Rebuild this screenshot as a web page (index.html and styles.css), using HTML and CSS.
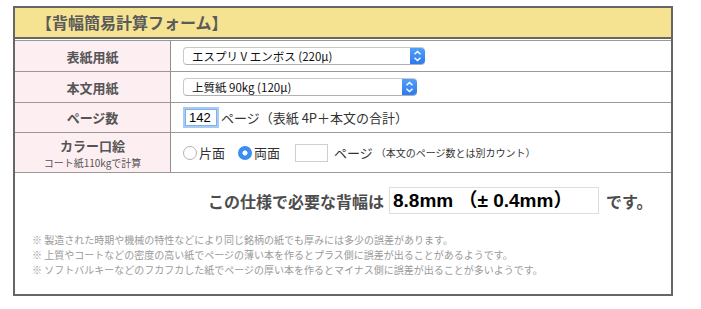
FILE: index.html
```html
<!DOCTYPE html>
<html lang="ja">
<head>
<meta charset="utf-8">
<title>背幅簡易計算フォーム</title>
<link rel="stylesheet" href="styles.css">
</head>
<body>
<div class="form">
  <h2 class="form-title">【背幅簡易計算フォーム】</h2>
  <div class="rows">
    <div class="row row-a">
      <div class="label">表紙用紙</div>
      <div class="field">
        <div class="select select-cover">
          <span class="select-text">エスプリ V エンボス (220μ)</span>
          <span class="select-btn"><svg width="15" height="18" viewBox="0 0 15 18"><path d="M4.5 7.2 L7.5 4.4 L10.5 7.2 M4.5 10.8 L7.5 13.6 L10.5 10.8" fill="none" stroke="#fff" stroke-width="1.4"/></svg></span>
        </div>
      </div>
    </div>
    <div class="row row-a">
      <div class="label">本文用紙</div>
      <div class="field">
        <div class="select select-body">
          <span class="select-text">上質紙 90kg (120μ)</span>
          <span class="select-btn"><svg width="15" height="18" viewBox="0 0 15 18"><path d="M4.5 7.2 L7.5 4.4 L10.5 7.2 M4.5 10.8 L7.5 13.6 L10.5 10.8" fill="none" stroke="#fff" stroke-width="1.4"/></svg></span>
        </div>
      </div>
    </div>
    <div class="row row-b">
      <div class="label">ページ数</div>
      <div class="field field-pages">
        <span class="num-input focused">142</span>
        <span class="field-text">ページ（表紙 4P＋本文の合計）</span>
      </div>
    </div>
    <div class="row row-c">
      <div class="label label-stack">
        <span class="label-main">カラー口絵</span>
        <span class="label-sub">コート紙110kgで計算</span>
      </div>
      <div class="field field-color">
        <span class="radio"></span><span class="field-text">片面</span>
        <span class="radio checked"></span><span class="field-text">両面</span>
        <span class="num-input empty"></span>
        <span class="field-text">ページ</span>
        <span class="small-note">（本文のページ数とは別カウント）</span>
      </div>
    </div>
  </div>
  <div class="result">
    <span class="result-label">この仕様で必要な背幅は</span>
    <span class="result-box">8.8mm （± 0.4mm）</span>
    <span class="result-label">です。</span>
  </div>
  <ul class="notes">
    <li>※ 製造された時期や機械の特性などにより同じ銘柄の紙でも厚みには多少の誤差があります。</li>
    <li>※ 上質やコートなどの密度の高い紙でページの薄い本を作るとプラス側に誤差が出ることがあるようです。</li>
    <li>※ ソフトバルキーなどのフカフカした紙でページの厚い本を作るとマイナス側に誤差が出ることが多いようです。</li>
  </ul>
</div>
</body>
</html>
```

FILE: styles.css
```css
* { box-sizing: border-box; }

body {
  margin: 0;
  background: #fff;
  font-family: "Noto Sans CJK JP", "Noto Sans", sans-serif;
  color: #333;
}

.form {
  width: 660px;
  height: 290px;
  margin: 6px 0 0 13px;
  border: 2px solid #666;
}

.form-title {
  margin: 0 0 1px;
  height: 31px;
  padding-left: 21px;
  background: #f5e391;
  border-bottom: 2px solid #666;
  font-size: 16px;
  font-weight: bold;
  line-height: 29px;
  color: #5a5a5a;
}

.rows {
  border-top: 1px solid #999;
}

.row {
  display: grid;
  grid-template-columns: 156px 1fr;
  border-bottom: 1px solid #999;
}
.row-a { height: 31px; }
.row-b { height: 30px; }
.row-c { height: 40px; }

.label {
  display: flex;
  align-items: center;
  justify-content: center;
  background: #fdeef2;
  border-right: 1px solid #8f8f8f;
  font-size: 13px;
  font-weight: bold;
  color: #555;
}

.label-stack {
  flex-direction: column;
  padding-top: 2px;
}
.label-main {
  line-height: 16px;
}
.label-sub {
  margin-top: 3px;
  font-size: 10px;
  font-weight: normal;
  line-height: 12px;
  color: #555;
}

.field {
  display: flex;
  align-items: center;
  padding-left: 12px;
}

.select {
  display: flex;
  align-items: stretch;
  height: 18px;
  border: 1px solid #c9c9c9;
  border-bottom-color: #b0b0b0;
  border-right: none;
  border-radius: 4px;
  background: #fff;
  font-size: 11.5px;
  color: #111;
  overflow: hidden;
}
.select-cover { width: 242px; }
.select-body { width: 234px; }

.select-text {
  flex: 1;
  padding-left: 8px;
  line-height: 16px;
}

.select-btn {
  width: 15px;
  margin: -1px 0;
  background: linear-gradient(#55a2f8, #2a78ee);
  border-radius: 0 4px 4px 0;
  display: flex;
  align-items: center;
  justify-content: center;
}

.field-pages { padding-left: 14px; }

.num-input {
  display: inline-block;
  height: 17px;
  border: 1px solid #c5c5c5;
  background: #fff;
  font-family: "Liberation Sans", "Noto Sans CJK JP", sans-serif;
  font-size: 13px;
  line-height: 15px;
  color: #000;
}
.num-input.focused {
  width: 32px;
  padding-left: 3px;
  border-color: #7fb0ee;
  box-shadow: 0 0 0 2px #a8cbf5;
}
.num-input.empty {
  width: 33px;
  height: 18px;
  margin-left: 15px;
  border-color: #cfcfcf;
}

.field-text {
  margin-left: 4px;
  font-size: 13px;
  color: #333;
}

.field-color { padding-left: 12px; }

.radio {
  width: 14px;
  height: 14px;
  border: 1px solid #b3b3b3;
  border-radius: 50%;
  background: #fff;
}
.radio.checked {
  margin-left: 13px;
  border: none;
  background: radial-gradient(circle, #fff 0 2.3px, #3b8eef 2.8px);
}
.field-color .field-text { margin-left: 2px; }
.field-color .num-input + .field-text { margin-left: 6px; }

.small-note {
  margin-left: 3px;
  font-size: 10px;
  color: #333;
}

.result {
  display: flex;
  align-items: center;
  padding: 14px 0 0 193px;
}

.result-label {
  font-size: 16px;
  font-weight: bold;
  color: #4d4d4d;
}

.result-box {
  width: 210px;
  height: 27px;
  margin: 0 7px 0 5px;
  padding-left: 3px;
  border: 1px solid #dedede;
  font-family: "Liberation Sans", "Noto Sans CJK JP", sans-serif;
  font-size: 19px;
  font-weight: bold;
  line-height: 25px;
  color: #000;
}

.notes {
  list-style: none;
  margin: 18px 0 0;
  padding: 0 0 0 17px;
  font-size: 10px;
  line-height: 15px;
  color: #9a9a9a;
}
```
